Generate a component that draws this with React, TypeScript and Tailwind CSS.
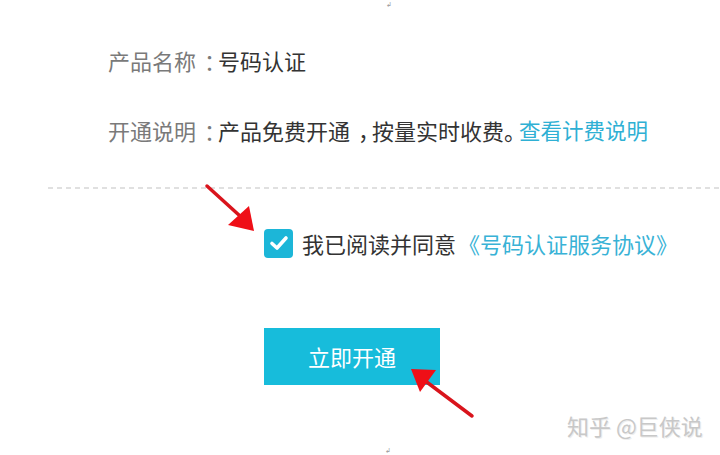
import React from "react";

const font = { fontFamily: '"Microsoft YaHei", "Noto Sans CJK SC", "Noto Sans", sans-serif' };

export default function App() {
  return (
    <div className="relative w-[720px] h-[455px] overflow-hidden bg-white" style={font}>
      <div className="flex flex-col">
        <div className="ml-[108px] mt-[45px] h-[30px] flex items-center text-[22px] leading-[30px] whitespace-nowrap">
          <span className="text-[#7a7a7a]">产品名称</span>
          <span className="ml-[8px] tracking-[-8px] text-[#7a7a7a]">：</span>
          <span className="text-[#333]">号码认证</span>
        </div>
        <div className="ml-[108px] mt-[40px] h-[30px] flex items-center text-[22px] leading-[30px] whitespace-nowrap">
          <span className="text-[#7a7a7a]">开通说明</span>
          <span className="ml-[8px] tracking-[-8px] text-[#7a7a7a]">：</span>
          <span className="text-[#333]">产品免费开通</span>
          <span className="ml-[8px] tracking-[-8px] text-[#333]">，</span>
          <span className="text-[#333]">按量实时收费</span>
          <span className="tracking-[-8px] text-[#333]">。</span>
          <span className="ml-[1px] text-[21.5px] text-[#2fb0d4]">查看计费说明</span>
        </div>
        <div className="ml-[48px] mt-[42px] h-[2px] bg-[repeating-linear-gradient(90deg,#e0e0e0_0_5px,transparent_5px_9px)]" />
        <div className="ml-[264px] mt-[39px] h-[30px] flex items-center whitespace-nowrap">
          <div className="w-[29px] h-[29px] rounded-[4px] bg-[#1cb6d8] flex items-center justify-center">
            <svg width="22" height="22" viewBox="0 0 22 22">
              <path d="M4 11.5 L9 16 L18 6" fill="none" stroke="#fff" strokeWidth="3.6" strokeLinecap="round" strokeLinejoin="round" />
            </svg>
          </div>
          <span className="ml-[9px] text-[22px] text-[#333]">我已阅读并同意</span>
          <span className="ml-[2px] text-[22px] text-[#38b2d6]">《号码认证服务协议》</span>
        </div>
        <div className="ml-[264px] mt-[70px]">
          <button className="w-[176px] h-[57px] bg-[#17bcdb] text-white text-[22px] flex items-center justify-center">
            立即开通
          </button>
        </div>
      </div>

      <svg className="absolute inset-0 pointer-events-none" width="720" height="455" viewBox="0 0 720 455">
        <line x1="207" y1="186" x2="240" y2="216" stroke="#d9141c" strokeWidth="3.5" strokeLinecap="round" />
        <polygon points="228,225 249,206 254,231" fill="#ef0f17" />
        <line x1="472" y1="416" x2="424" y2="380" stroke="#d9141c" strokeWidth="3.5" strokeLinecap="round" />
        <polygon points="411,369 436,370 420,392" fill="#ef0f17" />
      </svg>

      <div className="absolute left-[386px] top-0 text-[7px] leading-[8px] text-[#999]">↲</div>
      <div className="absolute left-[385px] top-[446px] text-[7px] leading-[8px] text-[#999]">↲</div>

      <div className="absolute left-[567px] top-[410px] text-[22px] leading-[30px] text-[#c8c8c8] whitespace-nowrap [text-shadow:1px_1px_0_#eeeeee]">
        知乎 @巨侠说
      </div>
    </div>
  );
}
